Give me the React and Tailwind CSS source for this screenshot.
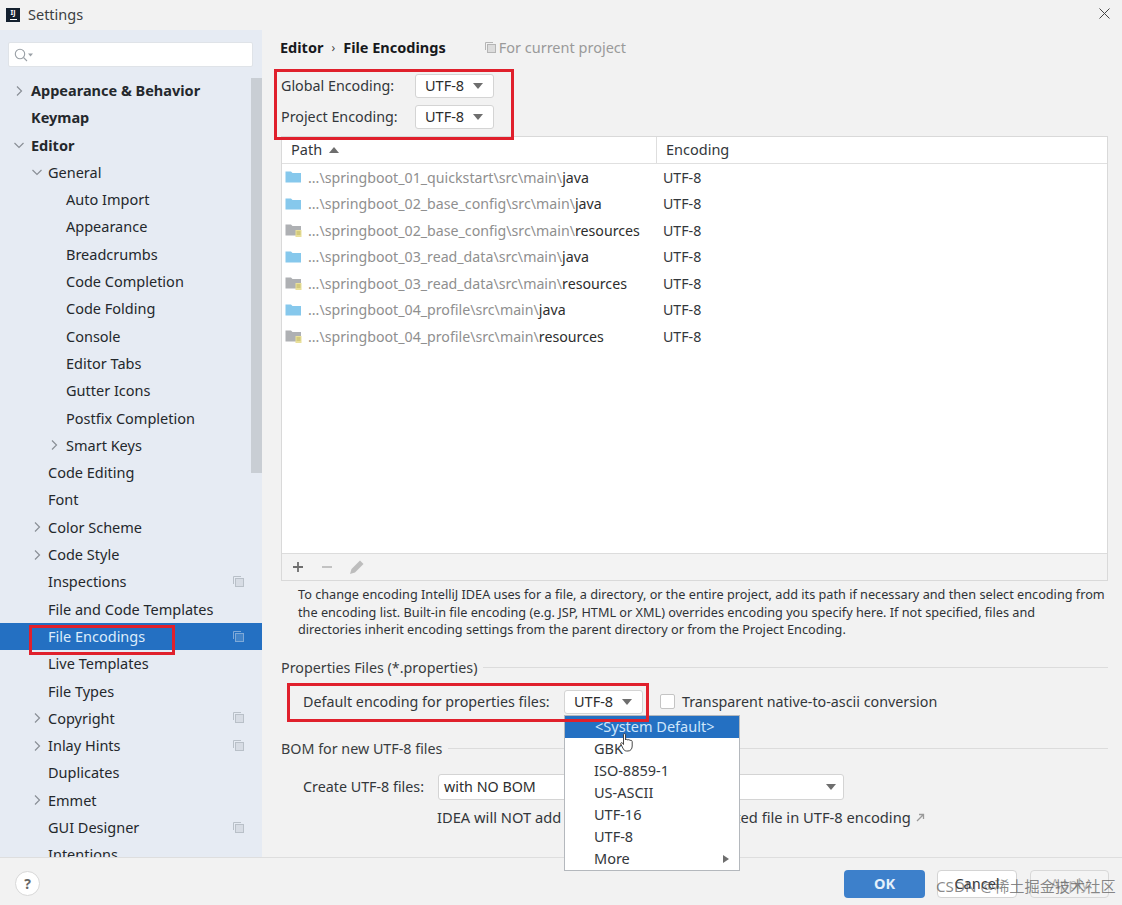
const FONT = "font-['Noto_Sans','Noto_Sans_CJK_SC',sans-serif]";

const tree = [
  { t: "Appearance & Behavior", d: 0, b: 1, a: "r" },
  { t: "Keymap", d: 0, b: 1 },
  { t: "Editor", d: 0, b: 1, a: "d" },
  { t: "General", d: 1, a: "d" },
  { t: "Auto Import", d: 2 },
  { t: "Appearance", d: 2 },
  { t: "Breadcrumbs", d: 2 },
  { t: "Code Completion", d: 2 },
  { t: "Code Folding", d: 2 },
  { t: "Console", d: 2 },
  { t: "Editor Tabs", d: 2 },
  { t: "Gutter Icons", d: 2 },
  { t: "Postfix Completion", d: 2 },
  { t: "Smart Keys", d: 2, a: "r" },
  { t: "Code Editing", d: 1 },
  { t: "Font", d: 1 },
  { t: "Color Scheme", d: 1, a: "r" },
  { t: "Code Style", d: 1, a: "r" },
  { t: "Inspections", d: 1, c: 1 },
  { t: "File and Code Templates", d: 1 },
  { t: "File Encodings", d: 1, c: 1, s: 1 },
  { t: "Live Templates", d: 1 },
  { t: "File Types", d: 1 },
  { t: "Copyright", d: 1, a: "r", c: 1 },
  { t: "Inlay Hints", d: 1, a: "r", c: 1 },
  { t: "Duplicates", d: 1 },
  { t: "Emmet", d: 1, a: "r" },
  { t: "GUI Designer", d: 1, c: 1 },
  { t: "Intentions", d: 1 },
];

const paths = [
  ["...\\springboot_01_quickstart\\src\\main\\", "java"],
  ["...\\springboot_02_base_config\\src\\main\\", "java"],
  ["...\\springboot_02_base_config\\src\\main\\", "resources"],
  ["...\\springboot_03_read_data\\src\\main\\", "java"],
  ["...\\springboot_03_read_data\\src\\main\\", "resources"],
  ["...\\springboot_04_profile\\src\\main\\", "java"],
  ["...\\springboot_04_profile\\src\\main\\", "resources"],
];

function Chevron({ dir, className = "" }) {
  return (
    <svg width="12" height="12" viewBox="0 0 12 12" fill="none" stroke="#8a8f96" strokeWidth="1.2" className={className}>
      {dir === "r" ? <path d="M4 1.5 L8.5 6 L4 10.5" /> : <path d="M1.5 4 L6 8.5 L10.5 4" />}
    </svg>
  );
}

function CopyIcon({ color = "#b9c0c8", className = "" }) {
  return (
    <svg width="11" height="11" viewBox="0 0 11 11" fill="none" stroke={color} strokeWidth="1" className={className}>
      <path d="M0.5 8 V0.5 H8" />
      <rect x="2.5" y="2.5" width="8" height="8" fill={color} fillOpacity="0.35" />
    </svg>
  );
}

function Caret({ className = "" }) {
  return (
    <svg width="10" height="6" viewBox="0 0 10 6" className={className}>
      <path d="M0 0 H10 L5 6 Z" fill="#6e6e6e" />
    </svg>
  );
}

function Combo({ value, className = "" }) {
  return (
    <div className={`h-[24px] flex items-center justify-between bg-white border border-[#d4d4d4] rounded-[3px] pl-[9px] pr-[10px] text-[14.5px] text-[#2d2d2d] ${className}`}>
      <span>{value}</span>
      <Caret />
    </div>
  );
}

function FolderIcon({ res }) {
  return (
    <svg width="17" height="14" viewBox="0 0 17 14" className="shrink-0">
      <path d="M0.5 1.5 H6 L7.5 3 H16 V12.5 H0.5 Z" fill={res ? "#aeb0b3" : "#86c8ec"} />
      {res && <rect x="10.5" y="7" width="6" height="7" fill="#e9e09a" />}
      {res && <path d="M11.5 9 H15.5 M11.5 11 H15.5" stroke="#b0a850" strokeWidth="0.8" />}
    </svg>
  );
}

function Sidebar() {
  return (
    <aside className="relative w-[262px] shrink-0 bg-[#e6ebf3] flex flex-col overflow-hidden">
      <div className="mt-[12px] ml-[8px] w-[245px] h-[25px] bg-white border border-[#dfe3e8] rounded-[2px] flex items-center pl-[5px] shrink-0">
        <svg width="20" height="14" viewBox="0 0 20 14" fill="none" stroke="#9aa0a6" strokeWidth="1.1">
          <circle cx="6" cy="6" r="4.7" />
          <path d="M9.5 9.5 L13 13" />
          <path d="M14 5.5 H19 L16.5 8.5 Z" fill="#9aa0a6" stroke="none" />
        </svg>
      </div>
      <div className="mt-[9.6px] flex flex-col">
        {tree.map((n) => (
          <div
            key={n.t}
            className={`relative h-[27.3px] shrink-0 flex items-center text-[14.5px] leading-none ${n.s ? "bg-[#2470c2] text-[#dcecfb]" : "text-[#24282c]"} ${n.b ? "font-bold text-[#15181b]" : ""} ${n.d === 0 ? "pl-[31px]" : n.d === 1 ? "pl-[48px]" : "pl-[66px]"}`}
          >
            {n.a && (
              <Chevron
                dir={n.a}
                className={`absolute top-[8px] ${n.d === 0 ? "left-[13px]" : n.d === 1 ? "left-[31px]" : "left-[48px]"}`}
              />
            )}
            <span>{n.t}</span>
            {n.c && <CopyIcon color={n.s ? "#7ea9d8" : "#b9c0c8"} className="absolute left-[233px] top-[8px]" />}
          </div>
        ))}
      </div>
      <div className="absolute left-[251px] top-[48px] w-[11px] h-[395px] bg-[#c9ced4]" />
    </aside>
  );
}

function Content() {
  return (
    <main className="relative flex-1 pl-[18px] pr-[14px] min-w-0">
      <div className="h-[34px] flex items-center pt-[1px] text-[14.5px]">
        <span className="font-bold text-[#17191c]">Editor</span>
        <span className="mx-[8px] text-[#444] text-[12px]">›</span>
        <span className="font-bold text-[#17191c]">File Encodings</span>
        <CopyIcon color="#b5b5b5" className="ml-[39px] mr-[3px]" />
        <span className="text-[#9a9a9a]">For current project</span>
      </div>

      <div className="mt-[10px] flex items-center h-[24px] text-[14.3px] text-[#33373b] pl-[1px]">
        <span className="w-[134px]">Global Encoding:</span>
        <Combo value="UTF-8" className="w-[79px]" />
      </div>
      <div className="mt-[7px] flex items-center h-[24px] text-[14.3px] text-[#33373b] pl-[1px]">
        <span className="w-[134px]">Project Encoding:</span>
        <Combo value="UTF-8" className="w-[79px]" />
      </div>

      <div className="mt-[7px] ml-[1px] h-[445px] border border-[#d9d9d9] flex flex-col">
        <div className="h-[27px] bg-white border-b border-[#e0e0e0] flex items-center text-[14.5px] text-[#33373b] shrink-0">
          <div className="w-[375px] h-full border-r border-[#dedede] pl-[9px] flex items-center gap-[7px]">
            <span>Path</span>
            <svg width="10" height="6" viewBox="0 0 10 6"><path d="M0 6 H10 L5 0 Z" fill="#6e6e6e" /></svg>
          </div>
          <span className="pl-[9px]">Encoding</span>
        </div>
        <div className="flex-1 bg-white">
          {paths.map(([p, l], i) => (
            <div key={i} className="h-[26.5px] flex items-center pl-[3px] text-[14.2px]">
              <FolderIcon res={l === "resources"} />
              <span className="ml-[6px] w-[348px] whitespace-nowrap">
                <span className="text-[#8f8f8f]">{p}</span>
                <span className="text-[#2d2d2d]">{l}</span>
              </span>
              <span className="text-[#33373b] pl-[7px]">UTF-8</span>
            </div>
          ))}
        </div>
        <div className="h-[27px] bg-[#f3f3f3] border-t border-[#dcdcdc] flex items-center pl-[9px] gap-[15px] shrink-0">
          <svg width="14" height="14" viewBox="0 0 14 14" stroke="#6e6e6e" strokeWidth="1.8"><path d="M7 2 V12 M2 7 H12" /></svg>
          <svg width="14" height="14" viewBox="0 0 14 14" stroke="#bdbdbd" strokeWidth="1.8"><path d="M2 7 H12" /></svg>
          <svg width="16" height="16" viewBox="0 0 16 16" fill="#bdbdbd"><path d="M1 15 L2.5 10 L11 1.5 L14.5 5 L6 13.5 Z" /></svg>
        </div>
      </div>

      <p className="ml-[18px] mt-[5px] text-[12.7px] leading-[17.5px] text-[#2f3337] whitespace-nowrap">
        To change encoding IntelliJ IDEA uses for a file, a directory, or the entire project, add its path if necessary and then select encoding from<br />
        the encoding list. Built-in file encoding (e.g. JSP, HTML or XML) overrides encoding you specify here. If not specified, files and<br />
        directories inherit encoding settings from the parent directory or from the Project Encoding.
      </p>

      <div className="mt-[19px] ml-[1px] flex items-center text-[14.3px] text-[#3a3d40] h-[20px]">
        <span>Properties Files (*.properties)</span>
        <div className="flex-1 h-px bg-[#dcdcdc] ml-[6px]" />
      </div>

      <div className="mt-[12px] ml-[23px] flex items-center h-[24px] text-[14.3px] text-[#33373b]">
        <span className="w-[261px]">Default encoding for properties files:</span>
        <Combo value="UTF-8" className="w-[79px]" />
        <div className="ml-[17px] w-[15px] h-[15px] bg-white border border-[#c4c4c4] rounded-[2px]" />
        <span className="ml-[7px]">Transparent native-to-ascii conversion</span>
      </div>

      <div className="mt-[25px] ml-[1px] flex items-center text-[14.3px] text-[#3a3d40] h-[20px]">
        <span>BOM for new UTF-8 files</span>
        <div className="flex-1 h-px bg-[#dcdcdc] ml-[6px]" />
      </div>

      <div className="mt-[15px] ml-[23px] flex items-center h-[26px] text-[14.3px] text-[#33373b]">
        <span className="w-[135px]">Create UTF-8 files:</span>
        <div className="w-[406px] h-[26px] bg-white border border-[#d4d4d4] rounded-[3px] flex items-center justify-between pl-[5px] pr-[7px] text-[#2d2d2d]">
          <span>with NO BOM</span>
          <Caret />
        </div>
      </div>

      <div className="mt-[8px] ml-[157px] flex items-center text-[14.7px] text-[#33373b] whitespace-nowrap h-[20px]">
        <span>IDEA will NOT add UTF-8 BOM to every created file in UTF-8 encoding</span>
        <svg width="9" height="9" viewBox="0 0 9 9" className="ml-[5px]" fill="none" stroke="#9a9a9a" strokeWidth="1.3"><path d="M1 8 L7.5 1.5 M3 1.5 H7.5 V6" /></svg>
      </div>
    </main>
  );
}

function Popup() {
  const items = ["GBK", "ISO-8859-1", "US-ASCII", "UTF-16", "UTF-8"];
  return (
    <div className="absolute left-[564px] top-[715px] w-[176px] h-[156px] bg-white border border-[#b4b8bd] text-[14.5px] text-[#33373b] z-10">
      <div className="h-[22px] bg-[#2470c2] text-[#cfe6fb] pl-[30px] flex items-center">&lt;System Default&gt;</div>
      {items.map((i) => (
        <div key={i} className="h-[22px] pl-[29px] flex items-center">{i}</div>
      ))}
      <div className="h-[22px] pl-[29px] flex items-center justify-between pr-[10px]">
        <span>More</span>
        <svg width="6" height="8" viewBox="0 0 6 8"><path d="M0 0 V8 L6 4 Z" fill="#6e6e6e" /></svg>
      </div>
      <svg width="14" height="19" viewBox="0 0 14 19" className="absolute left-[55px] top-[17px]" fill="#fff" stroke="#333" strokeWidth="0.9">
        <path d="M3.5 1.5 C3.5 0.4 5.5 0.4 5.5 1.5 V7 C6 6 7.6 6 7.8 7.2 C8.3 6.3 9.8 6.4 10 7.6 C10.6 7 12.2 7.3 12.2 8.6 V13 C12.2 16 10.5 18 8 18 H6.5 C4.5 18 3.6 16.6 2.8 15 L0.8 11 C0.3 10 1.6 9 2.5 10 L3.5 11.5 Z" />
      </svg>
    </div>
  );
}

export default function App() {
  return (
    <div className={`relative w-[1122px] h-[905px] bg-[#f2f2f2] overflow-hidden flex flex-col ${FONT}`}>
      <header className="h-[30px] shrink-0 flex items-center pl-[6px] text-[14.5px] text-[#3c3f42]">
        <div className="w-[14px] h-[14px] bg-[#14202e] mr-[8px] flex flex-col items-center pt-[1px]">
          <span className="text-[7px] leading-[8px] font-bold text-white">IJ</span>
          <div className="w-[7px] h-px bg-white mt-[2px]" />
        </div>
        <span>Settings</span>
        <svg width="11" height="11" viewBox="0 0 11 11" className="ml-auto mr-[12px] mb-[3px]" stroke="#444" strokeWidth="1"><path d="M0.5 0.5 L10.5 10.5 M10.5 0.5 L0.5 10.5" /></svg>
      </header>

      <div className="flex h-[827px] shrink-0 overflow-hidden">
        <Sidebar />
        <Content />
      </div>

      <footer className="h-[48px] shrink-0 border-t border-[#dedede] flex items-center pt-[4px] pl-[15px] pr-[13px] text-[14.5px]">
        <div className="w-[25px] h-[25px] rounded-full bg-white border border-[#d8d8d8] flex items-center justify-center font-bold text-[#666] text-[14px]">?</div>
        <button className="ml-auto w-[81px] h-[28px] rounded-[4px] bg-[#3d80cb] text-[#e4f0fb] font-bold">OK</button>
        <button className="ml-[12px] w-[80px] h-[28px] rounded-[4px] bg-white border border-[#d4d4d4] text-[#33373b]">Cancel</button>
        <button className="ml-[13px] w-[79px] h-[28px] rounded-[4px] bg-[#f4f4f4] border border-[#d8d8d8] text-[#b5b5b5]">Apply</button>
      </footer>

      <Popup />

      {/* annotation boxes */}
      <div className="absolute left-[274px] top-[69px] w-[240px] h-[71px] border-[3px] border-[#e0202c]" />
      <div className="absolute left-[29px] top-[625px] w-[146px] h-[30px] border-[3px] border-[#e0202c]" />
      <div className="absolute left-[287px] top-[683px] w-[362px] h-[39px] border-[3px] border-[#e0202c] z-20" />

      {/* watermark */}
      <div className="absolute left-[936px] top-[875px] text-[15.2px] leading-[22px] text-[#555]/70 whitespace-nowrap z-20">CSDN @稀土掘金技术社区</div>
    </div>
  );
}
